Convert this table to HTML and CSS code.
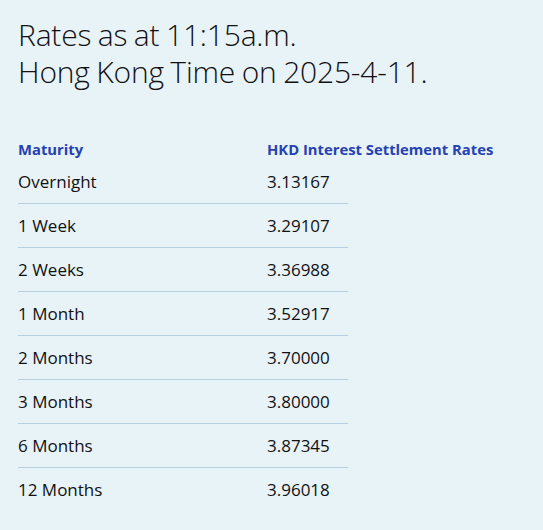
FILE: index.html
```html
<!DOCTYPE html>
<html>
<head>
<meta charset="utf-8">
<link rel="stylesheet" href="styles.css">
</head>
<body>
<div class="page">
  <h1 class="title">Rates as at 11:15a.m.<br>Hong Kong Time on 2025-4-11.</h1>
  <div class="table">
    <div class="head">
      <div class="c1">Maturity</div>
      <div class="c2">HKD Interest Settlement Rates</div>
    </div>
    <div class="row"><div class="c1">Overnight</div><div class="c2">3.13167</div></div>
    <div class="row"><div class="c1">1 Week</div><div class="c2">3.29107</div></div>
    <div class="row"><div class="c1">2 Weeks</div><div class="c2">3.36988</div></div>
    <div class="row"><div class="c1">1 Month</div><div class="c2">3.52917</div></div>
    <div class="row"><div class="c1">2 Months</div><div class="c2">3.70000</div></div>
    <div class="row"><div class="c1">3 Months</div><div class="c2">3.80000</div></div>
    <div class="row"><div class="c1">6 Months</div><div class="c2">3.87345</div></div>
    <div class="row last"><div class="c1">12 Months</div><div class="c2">3.96018</div></div>
  </div>
</div>
</body>
</html>
```
FILE: styles.css
```css
html, body {
  margin: 0;
  padding: 0;
  background: #e8f3f8;
}
body {
  font-family: "Open Sans", "Noto Sans", sans-serif;
  color: #111;
}
.page {
  padding: 16px 18px 0 18px;
}
.title {
  margin: 0;
  font-weight: 300;
  font-size: 30px;
  line-height: 37px;
  color: #111;
  letter-spacing: -0.2px;
  word-spacing: -1px;
}
.table {
  margin-top: 48px;
  width: 330px;
}
.head {
  display: flex;
  height: 22px;
  align-items: center;
  font-size: 14.8px;
  font-weight: 700;
  color: #2541b2;
  white-space: nowrap;
}
.row {
  display: flex;
  height: 43px;
  align-items: center;
  border-bottom: 1px solid #b5cfe3;
  font-size: 17px;
}
.row.last {
  border-bottom: none;
}
.c1 {
  width: 249px;
  flex: none;
}
.c2 {
  flex: none;
}
```
